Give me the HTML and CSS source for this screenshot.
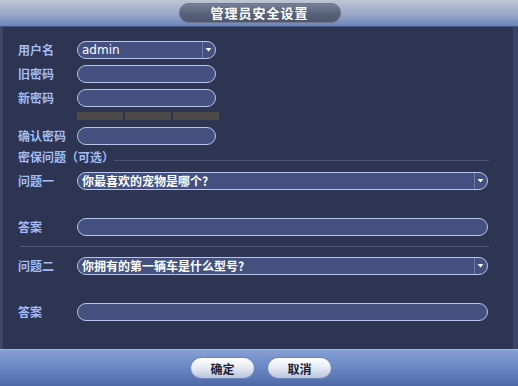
FILE: index.html
```html
<!DOCTYPE html>
<html lang="zh-CN">
<head>
    <meta charset="UTF-8">
    <title>管理员安全设置</title>
    <link rel="stylesheet" href="styles.css">
</head>
<body>
    <div class="dialog">
        <!-- 标题栏 -->
        <div class="header">
            <div class="title-pill">管理员安全设置</div>
        </div>

        <div class="content">
            <div class="row first">
                <span class="label">用户名</span>
                <div class="field select short">
                    <span class="value latin">admin</span>
                    <span class="arrow"><svg width="7" height="5" viewBox="0 0 7 5"><path d="M0.5 1 L6.5 1 L3.5 4.5 Z" fill="#fff"/></svg></span>
                </div>
            </div>
            <div class="row">
                <span class="label">旧密码</span>
                <div class="field short"></div>
            </div>
            <div class="row">
                <span class="label">新密码</span>
                <div class="field short"></div>
            </div>
            <div class="strength">
                <span></span><span></span><span></span>
            </div>
            <div class="row">
                <span class="label">确认密码</span>
                <div class="field short"></div>
            </div>

            <div class="section-title">
                <span class="label">密保问题（可选）</span>
                <span class="rule"></span>
            </div>

            <div class="row q">
                <span class="label">问题一</span>
                <div class="field select wide">
                    <span class="value">你最喜欢的宠物是哪个?</span>
                    <span class="arrow"><svg width="7" height="5" viewBox="0 0 7 5"><path d="M0.5 1 L6.5 1 L3.5 4.5 Z" fill="#fff"/></svg></span>
                </div>
            </div>
            <div class="row answer">
                <span class="label">答案</span>
                <div class="field wide"></div>
            </div>

            <div class="separator"></div>

            <div class="row q2">
                <span class="label">问题二</span>
                <div class="field select wide">
                    <span class="value">你拥有的第一辆车是什么型号?</span>
                    <span class="arrow"><svg width="7" height="5" viewBox="0 0 7 5"><path d="M0.5 1 L6.5 1 L3.5 4.5 Z" fill="#fff"/></svg></span>
                </div>
            </div>
            <div class="row answer">
                <span class="label">答案</span>
                <div class="field wide"></div>
            </div>
        </div>

        <!-- 底部按钮 -->
        <div class="footer">
            <button class="btn">确定</button>
            <button class="btn">取消</button>
        </div>
    </div>
</body>
</html>
```

FILE: styles.css
```css
body {
    margin: 0;
    padding: 0;
    background-color: #2e3553;
    font-family: "Noto Sans CJK SC", "Liberation Sans", sans-serif;
}
.dialog {
    width: 518px;
    height: 386px;
    display: flex;
    flex-direction: column;
    overflow: hidden;
}
/* 标题栏 */
.header {
    height: 27px;
    flex: none;
    display: flex;
    justify-content: center;
    align-items: flex-start;
    background: linear-gradient(#c0c5d2, #98a8c8 55%, #6a85bd);
    border-bottom: 1px solid #46557e;
    box-sizing: border-box;
}
.title-pill {
    margin-top: 3px;
    margin-left: 1px;
    width: 162px;
    height: 20px;
    border-radius: 10px;
    background: linear-gradient(#7a8399, #596379 50%, #4b546c);
    box-shadow: inset 0 0 0 1px #6d7790;
    color: #fff;
    font-size: 13px;
    font-weight: bold;
    line-height: 20px;
    text-align: center;
    letter-spacing: 1px;
}
/* 内容区 */
.content {
    flex: 1;
    background-color: #2e3553;
    border-left: 3px solid #3f4767;
    border-right: 5px solid #3b4464;
    padding-left: 15px;
    padding-right: 24px;
}
.row {
    display: flex;
    align-items: center;
    height: 17px;
    margin-top: 7px;
}
.row.first {
    margin-top: 14px;
}
.row.q {
    margin-top: 9px;
}
.row.answer {
    margin-top: 29px;
}
.row.q2 {
    margin-top: 10px;
}
.label {
    width: 59px;
    flex: none;
    color: #a3bcf1;
    font-size: 12px;
    font-weight: bold;
    white-space: nowrap;
}
.field {
    height: 18px;
    box-sizing: border-box;
    border: 1px solid #b7c6ea;
    border-radius: 9px;
    background-color: #445180;
    display: flex;
    align-items: center;
}
.field.short {
    width: 139px;
}
.field.wide {
    width: 411px;
}
.field .value {
    flex: 1;
    padding-left: 4px;
    color: #fff;
    font-size: 12px;
    font-weight: bold;
    white-space: nowrap;
}
.field .value.latin {
    font-family: "DejaVu Sans", sans-serif;
    font-weight: normal;
    font-size: 12px;
}
.field .arrow {
    width: 11px;
    height: 16px;
    border-left: 1px solid #6e7ca8;
    display: flex;
    align-items: center;
    justify-content: center;
    padding-right: 1px;
}
/* 密码强度 */
.strength {
    display: flex;
    gap: 2px;
    margin: 6px 0 0 59px;
    width: 142px;
    height: 8px;
}
.strength span {
    flex: 1;
    background-color: #4c4a46;
}
.section-title {
    display: flex;
    align-items: center;
    height: 14px;
    margin-top: 5px;
}
.section-title .label {
    width: auto;
}
.section-title .rule {
    flex: 1;
    height: 1px;
    margin-top: 8px;
    background-color: #4d5677;
}
.separator {
    height: 1px;
    margin: 11px 0 0 2px;
    background-color: #4d5677;
}
/* 底部 */
.footer {
    height: 37px;
    flex: none;
    display: flex;
    justify-content: center;
    align-items: center;
    gap: 14px;
    background: linear-gradient(#86a0d5, #6784c2 55%, #4d69a6);
    border-top: 1px solid #9db3e2;
    box-sizing: border-box;
    padding-left: 4px;
}
.btn {
    width: 63px;
    height: 20px;
    border: none;
    border-radius: 10px;
    background: linear-gradient(#ffffff, #e8ecf6 45%, #b9c3dc);
    box-shadow: 0 0 0 1px #6f86bd;
    color: #1c2033;
    font-family: "Noto Sans CJK SC", sans-serif;
    font-size: 12px;
    font-weight: bold;
    padding: 0;
    cursor: pointer;
}
```
